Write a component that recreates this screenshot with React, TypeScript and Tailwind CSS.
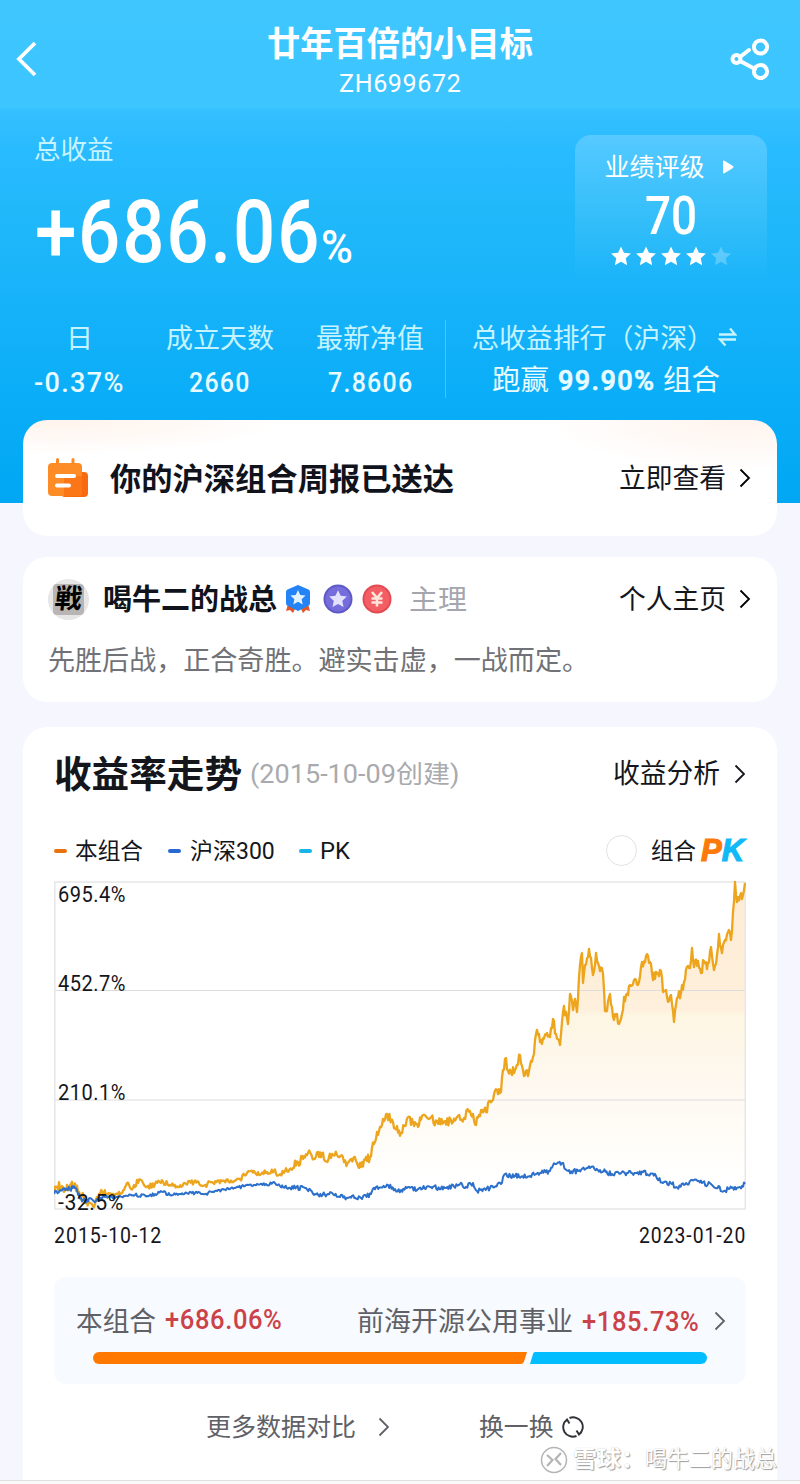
import { ReactNode, useLayoutEffect, useRef } from "react";

interface FitProps {
  className: string;
  children: ReactNode;
}

interface StatProps {
  label: string;
  value: string;
  labelWidth: string;
  valueWidth: string;
}

// squeezes a single line of text into the width of its box
const Fit = ({ className, children }: FitProps) => {
  const outer = useRef<HTMLSpanElement>(null);
  const inner = useRef<HTMLSpanElement>(null);

  useLayoutEffect(() => {
    if (!outer.current || !inner.current) return;
    const scale = outer.current.clientWidth / inner.current.offsetWidth;
    inner.current.style.transform = `scaleX(${scale})`;
  }, []);

  return (
    <span
      ref={outer}
      className={`block shrink-0 whitespace-nowrap leading-none ${className}`}
    >
      <span ref={inner} className="inline-block origin-left align-top">
        {children}
      </span>
    </span>
  );
};

const Chevron = ({ className }: { className: string }) => (
  <svg
    viewBox="0 0 12 20"
    className={`h-5 w-3 shrink-0 ${className}`}
    fill="none"
    stroke="currentColor"
    strokeWidth="1.8"
  >
    <path d="M1.5 1.5 10 10 1.5 18.5" />
  </svg>
);

const STAR =
  "M12 1.5 15.2 8.4 22.8 9.3 17.2 14.5 18.7 22 12 18.3 5.3 22 6.8 14.5 1.2 9.3 8.8 8.4Z";

const Stat = ({ label, value, labelWidth, valueWidth }: StatProps) => (
  <div className="flex flex-col items-center">
    <div className="flex h-[45px] items-center pt-[3px] text-[27px] text-[#c5f3ff]">
      <Fit className={labelWidth}>{label}</Fit>
    </div>
    <div className="flex h-[45px] items-center pt-[2px] text-[28.5px] font-medium tracking-wider text-[#e8fbff]">
      <Fit className={valueWidth}>{value}</Fit>
    </div>
  </div>
);

const portfolio = [
  [54, 1194], [57, 1187], [62, 1186], [66, 1190], [70, 1185], [74, 1186], [78, 1192], [84, 1198],
  [90, 1203], [95, 1204], [100, 1194], [106, 1195], [112, 1196], [120, 1194], [124, 1190],
  [127, 1183], [131, 1189], [135, 1187], [137, 1180], [143, 1183], [147, 1187], [155, 1184],
  [163, 1182], [170, 1185], [178, 1187], [186, 1184], [194, 1182], [203, 1186], [212, 1182],
  [222, 1181], [232, 1182], [240, 1179], [247, 1173], [254, 1171], [259, 1175], [267, 1172],
  [274, 1171], [279, 1175], [285, 1171], [293, 1168], [298, 1162], [303, 1159], [308, 1153],
  [314, 1159], [318, 1152], [322, 1153], [325, 1161], [331, 1158], [337, 1155], [344, 1162],
  [350, 1160], [356, 1161], [361, 1167], [365, 1160], [370, 1157], [374, 1144], [377, 1132],
  [380, 1127], [383, 1119], [387, 1114], [393, 1122], [397, 1126], [401, 1133], [408, 1117],
  [413, 1122], [418, 1127], [422, 1116], [429, 1119], [437, 1121], [445, 1121], [453, 1122],
  [458, 1116], [464, 1118], [470, 1111], [473, 1114], [476, 1125], [479, 1115], [482, 1110],
  [486, 1112], [490, 1101], [493, 1100], [497, 1090], [501, 1092], [503, 1070], [506, 1058],
  [508, 1071], [511, 1072], [515, 1070], [520, 1055], [523, 1070], [528, 1076], [531, 1061],
  [534, 1054], [536, 1034], [539, 1034], [542, 1044], [546, 1035], [550, 1037], [553, 1019],
  [556, 1034], [560, 1045], [562, 1022], [564, 1006], [568, 1024], [570, 994], [573, 1010],
  [575, 999], [577, 1012], [579, 977], [582, 953], [583, 983], [585, 965], [589, 949], [593, 975],
  [596, 953], [599, 966], [603, 974], [605, 1011], [607, 1011], [610, 994], [614, 1020],
  [617, 1014], [619, 1024], [622, 1014], [624, 997], [628, 995], [630, 985], [634, 980],
  [638, 985], [641, 967], [646, 956], [650, 962], [653, 980], [656, 972], [661, 971], [663, 992],
  [666, 990], [669, 1001], [671, 995], [674, 1022], [677, 998], [681, 993], [684, 982],
  [688, 966], [690, 968], [692, 948], [694, 967], [698, 961], [701, 973], [704, 961], [707, 969],
  [711, 947], [714, 970], [717, 955], [719, 934], [722, 953], [725, 940], [729, 930], [731, 940],
  [733, 912], [735, 882], [737, 902], [740, 896], [742, 899], [745, 883],
];

const index300 = [
  [54, 1194], [60, 1190], [64, 1188], [70, 1189], [75, 1188], [80, 1198], [85, 1201], [90, 1198],
  [96, 1201], [105, 1197], [115, 1198], [125, 1196], [135, 1195], [147, 1196], [155, 1194],
  [163, 1192], [170, 1195], [180, 1194], [195, 1193], [205, 1194], [215, 1191], [230, 1189],
  [245, 1186], [257, 1184], [267, 1185], [274, 1182], [280, 1186], [290, 1188], [305, 1188],
  [315, 1194], [328, 1194], [340, 1197], [350, 1197], [361, 1198], [371, 1194], [376, 1187],
  [388, 1185], [395, 1189], [401, 1190], [408, 1187], [418, 1189], [430, 1187], [445, 1188],
  [462, 1184], [465, 1188], [473, 1183], [477, 1191], [490, 1188], [501, 1184], [504, 1175],
  [515, 1176], [530, 1176], [540, 1173], [550, 1171], [555, 1164], [562, 1163], [568, 1171],
  [578, 1171], [590, 1168], [600, 1170], [612, 1174], [628, 1173], [643, 1172], [656, 1176],
  [663, 1183], [672, 1184], [676, 1187], [684, 1185], [692, 1180], [702, 1183], [712, 1185],
  [724, 1191], [735, 1187], [740, 1187], [745, 1184],
];

const toPath = (points: number[][], calm: number, lively: number) => {
  let d = `M${points[0][0]} ${points[0][1]}`;
  let seed = 17;
  for (let i = 1; i < points.length; i++) {
    const [x0, y0] = points[i - 1];
    const [x1, y1] = points[i];
    const steps = Math.max(1, Math.round((x1 - x0) / 1.1));
    for (let s = 1; s <= steps; s++) {
      seed = (seed * 16807) % 2147483647;
      const swing = x0 > 100 && x0 < 290 ? calm : lively;
      const noise = s === steps ? 0 : (seed / 2147483647 - 0.5) * swing;
      const x = x0 + ((x1 - x0) * s) / steps;
      const y = Math.max(882, y0 + ((y1 - y0) * s) / steps + noise);
      d += `L${x.toFixed(1)} ${y.toFixed(1)}`;
    }
  }
  return d;
};

const Header = () => (
  <header className="h-[503px] bg-[linear-gradient(180deg,#3fc6ff_0px,#3cc5ff_108px,#35c0ff_109px,#29bbff_150px,#20b8f9_220px,#18b3fa_290px,#0baef8_390px,#01a7f3_503px)] text-white">
    <div className="flex h-[108px] justify-between pl-4 pr-[30px] pt-6">
      <svg viewBox="0 0 21 36" className="mt-[17px] h-9 w-[21px]" fill="none" stroke="currentColor" strokeWidth="3.8">
        <path d="M19 2 3 18 19 34" />
      </svg>
      <div className="ml-[33px] flex flex-col items-center">
        <div className="flex h-[38px] items-center pt-px text-[34px] font-bold">
          <Fit className="w-[266px]">廿年百倍的小目标</Fit>
        </div>
        <div className="flex h-[42px] items-center text-[26.500px] tracking-wide">
          <Fit className="w-[122px]">ZH699672</Fit>
        </div>
      </div>
      <svg viewBox="0 0 40 42" className="mt-[14px] h-[42px] w-10" fill="none" stroke="currentColor" strokeWidth="4">
        <circle cx="30.500" cy="9" r="6.600" />
        <circle cx="6.500" cy="21" r="4" />
        <circle cx="30.500" cy="33.500" r="6.600" />
        <path d="M10 19 19 12M10 23 25 31" strokeLinecap="round" />
      </svg>
    </div>

    <div className="flex h-[207px] justify-between pl-[34px] pr-[33px] pt-[27px]">
      <div>
        <div className="flex h-7 items-center pt-[3px] text-[26.500px] text-[#c5f3ff]">
          <Fit className="w-20">总收益</Fit>
        </div>
        <div className="mt-[26px] flex items-end text-[87px] font-medium tracking-wide">
          <Fit className="ml-px w-[43px]">+</Fit>
          <Fit className="w-[243px]">686.06</Fit>
          <Fit className="mb-[6px] w-[34px] text-[46px]">%</Fit>
        </div>
      </div>
      <div className="flex h-[150px] w-48 flex-col items-center rounded-t-2xl bg-linear-to-b from-white/20 to-white/0">
        <div className="mt-[18px] flex h-7 items-center gap-[18px] pr-1 text-[25px]">
          <Fit className="w-[100px]">业绩评级</Fit>
          <svg viewBox="0 0 11 14" className="h-[14px] w-[11px]" fill="currentColor">
            <path d="M0 1.5Q0 0 1.5 .7L10 6Q11 7 10 8L1.5 13.3Q0 14 0 12.5Z" />
          </svg>
        </div>
        <div className="mt-[9px] text-[53px] font-medium">
          <Fit className="w-[52px]">70</Fit>
        </div>
        <div className="mt-[2px] flex gap-[3px]">
          {[1, 2, 3, 4, 5].map((n) => (
            <svg key={n} viewBox="0 0 24 24" className="size-[22px]" fill="currentColor" opacity={n < 5 ? 1 : 0.25}>
              <path d={STAR} />
            </svg>
          ))}
        </div>
      </div>
    </div>

    <div className="flex pl-[34px]">
      <Stat label="日" value="-0.37%" labelWidth="w-[27px]" valueWidth="w-[91px]" />
      <div className="ml-[41px]">
        <Stat label="成立天数" value="2660" labelWidth="w-[108px]" valueWidth="w-[62px]" />
      </div>
      <div className="ml-[42px]">
        <Stat label="最新净值" value="7.8606" labelWidth="w-[108px]" valueWidth="w-[85px]" />
      </div>
      <div className="ml-[21px] mt-[5px] h-[78px] w-px bg-white/25" />
      <div className="ml-[26px]">
        <div className="flex h-[45px] items-center pt-[3px] text-[27px] text-[#c5f3ff]">
          <Fit className="w-[242px]">总收益排行（沪深）</Fit>
          <svg viewBox="0 0 19 18" className="mb-[5px] ml-1 h-[18px] w-[19px]" fill="none" stroke="currentColor" strokeWidth="2.400">
            <path d="M1 6.500H17L12 .5M18 11.500H2L7.500 17.500" />
          </svg>
        </div>
        <div className="ml-5 flex h-[41px] items-center pt-px text-[28px] text-[#e8fbff]">
          <Fit className="w-[57px]">跑赢</Fit>
          <Fit className="ml-[9px] w-[97px] font-medium tracking-wider [-webkit-text-stroke:0.7px_#e8fbff]">99.90%</Fit>
          <Fit className="ml-2 w-[57px]">组合</Fit>
        </div>
      </div>
    </div>
  </header>
);

const WeeklyCard = () => (
  <section className="-mt-[83px] flex h-[116px] items-center rounded-3xl bg-white bg-[radial-gradient(ellipse_220px_34px_at_40px_0px,#fff4ed_0%,#fff9f5_55%,transparent_100%),radial-gradient(ellipse_200px_50px_at_720px_0px,#fff4ed_0%,#fffaf7_60%,transparent_100%)] pl-[25px] pr-[26px]">
    <svg viewBox="0 0 42 40" className="h-10 w-[42px]">
      <rect x="13" y="14" width="27" height="25" rx="4" fill="#f96a10" />
      <rect x="0" y="5" width="34" height="33" rx="4" fill="#fd8c26" />
      <path d="M16 38V22Q16 18 20 18H34V34Q34 38 30 38Z" fill="#fb7617" />
      <path d="M9.500 1.500V7M25 1.500V7" stroke="#fd8c26" strokeWidth="3" strokeLinecap="round" />
      <path d="M9 18H26M9 27.500H21" stroke="#fff" strokeWidth="4" strokeLinecap="round" />
    </svg>
    <Fit className="ml-5 mt-[2px] w-[344px] text-[31px] font-bold text-[#10131c]">你的沪深组合周报已送达</Fit>
    <Fit className="ml-auto mt-[3px] w-[107px] text-[27px] text-[#14161c]">立即查看</Fit>
    <Chevron className="ml-[13px]" />
  </section>
);

const OwnerCard = () => (
  <section className="mt-[21px] h-[145px] rounded-3xl bg-white pl-[25px] pr-[26px] pt-5">
    <div className="flex h-11 items-center">
      <div className="flex size-[41px] items-center justify-center rounded-full bg-[#e6e6e6]">
        <div className="flex size-[31px] items-center justify-center rounded-sm bg-[#b9b5b5] text-[27px] font-bold leading-none text-black">
          <span className="-skew-x-6">戦</span>
        </div>
      </div>
      <Fit className="ml-[14px] mt-[3px] w-[174px] text-[29px] font-bold text-[#10131c]">喝牛二的战总</Fit>
      <svg viewBox="0 0 26 30" className="ml-2 h-[30px] w-[26px]">
        <path d="M3 20 1 27 5 26 8 29 11 23ZM23 20 25 27 21 26 18 29 15 23Z" fill="#e2572b" />
        <path d="M13 1 23.500 5.500Q25 6.200 25 8V19Q25 21 23.500 21.700L13 27 2.500 21.700Q1 21 1 19V8Q1 6.200 2.500 5.500Z" fill="#2483f6" />
        <path d={STAR} transform="translate(4.600 5) scale(.7)" fill="#e2f3ff" />
      </svg>
      <svg viewBox="0 0 30 30" className="ml-3 size-[30px]">
        <circle cx="15" cy="15" r="14.500" fill="#5f59c6" />
        <circle cx="15" cy="15" r="12.500" fill="#756ddb" />
        <path d={STAR} transform="translate(5.200 4.900) scale(.82)" fill="#e4e1ff" />
      </svg>
      <svg viewBox="0 0 30 30" className="ml-[9px] size-[30px]">
        <circle cx="15" cy="15" r="14.500" fill="#e24a54" />
        <circle cx="15" cy="15" r="12.500" fill="#f35e64" />
        <path d="M10 8 15 14 20 8M15 14V22.500M9.500 14.500H20.500M9.500 18.500H20.500" fill="none" stroke="#ffe4dc" strokeWidth="2.600" />
      </svg>
      <Fit className="ml-[17px] mt-[3px] w-[58px] text-[28px] text-[#a5a6ad]">主理</Fit>
      <Fit className="ml-auto mt-[3px] w-[107px] text-[27px] text-[#14161c]">个人主页</Fit>
      <Chevron className="ml-[13px]" />
    </div>
    <div className="mt-[27px] text-[27px] text-[#717277]">
      <Fit className="w-[541px]">先胜后战，正合奇胜。避实击虚，一战而定。</Fit>
    </div>
  </section>
);

const Chart = () => {
  const line = toPath(portfolio, 5, 10);

  return (
    <div className="relative -mr-px mt-[10px] h-[329px] w-[692px] text-[21.500px] tracking-wide">
      <svg viewBox="54 881 692 329" className="h-full w-full">
        <defs>
          <linearGradient id="fade" x1="0" y1="882" x2="0" y2="1209" gradientUnits="userSpaceOnUse">
            <stop offset="0" stopColor="#fdebd4" />
            <stop offset=".39" stopColor="#fef0dc" />
            <stop offset=".41" stopColor="#fdf6e3" />
            <stop offset=".62" stopColor="#fef8f0" />
            <stop offset=".8" stopColor="#fffdf8" />
            <stop offset=".9" stopColor="#fff" />
          </linearGradient>
        </defs>
        <path d={`${line}L745 1209L54 1209Z`} fill="url(#fade)" />
        <path d="M54 990.500H745M54 1100H745" stroke="#dcdcdc" strokeWidth="1.200" />
        <rect x="54.800" y="882" width="690.500" height="327" fill="none" stroke="#e6e6e6" strokeWidth="1.500" />
        <path d={line} fill="none" stroke="#eca51c" strokeWidth="2.300" strokeLinejoin="round" />
        <path d={toPath(index300, 3, 5)} fill="none" stroke="#2c70cc" strokeWidth="2" strokeLinejoin="round" />
      </svg>
      <Fit className="absolute left-1 top-[3px] w-[68px]">695.4%</Fit>
      <Fit className="absolute left-1 top-[92px] w-[68px]">452.7%</Fit>
      <Fit className="absolute left-1 top-[201px] w-[68px]">210.1%</Fit>
      <Fit className="absolute left-1 top-[311px] w-[66px]">-32.5%</Fit>
    </div>
  );
};

const TrendCard = () => (
  <section className="mt-[25px] h-[753px] rounded-t-3xl bg-white px-[31px] pt-[22px] text-[#14161c]">
    <div className="flex h-[50px] items-center">
      <Fit className="mt-[2px] w-[188px] text-[37px] font-bold">收益率走势</Fit>
      <Fit className="ml-2 w-[209px] text-[25px] text-[#a9aaae]">(2015-10-09创建)</Fit>
      <Fit className="ml-auto mt-px w-[107px] text-[27px]">收益分析</Fit>
      <Chevron className="ml-[14px]" />
    </div>

    <div className="mt-[35px] flex h-[33px] items-center text-[23px]">
      <span className="h-1 w-[13px] rounded-sm bg-[#e8730e]" />
      <Fit className="ml-2 mt-[2px] w-[68px]">本组合</Fit>
      <span className="ml-[25px] h-1 w-[13px] rounded-sm bg-[#2869d2]" />
      <Fit className="ml-[9px] mt-[2px] w-[85px]">沪深300</Fit>
      <span className="ml-[24px] h-1 w-[13px] rounded-sm bg-[#18b4e8]" />
      <Fit className="ml-[8px] mt-[2px] w-[30px]">PK</Fit>
      <span className="ml-auto size-[31px] rounded-full border-[1.500px] border-[#e2e2e2]" />
      <Fit className="ml-[14px] mt-[2px] w-[45px]">组合</Fit>
      <Fit className="ml-[5px] mr-[2px] w-[43px] font-['Liberation_Sans'] text-[31px] font-bold italic">
        <span className="text-[#fb7a0a] [-webkit-text-stroke:1.200px_#fb7a0a]">P</span>
        <span className="text-[#12b9f7] [-webkit-text-stroke:1.200px_#12b9f7]">K</span>
      </Fit>
    </div>

    <div className="-mt-[1px] pt-[5px]">
      <Chart />
    </div>
    <div className="mt-[15px] flex justify-between text-[21.500px] tracking-wider">
      <Fit className="w-[108px]">2015-10-12</Fit>
      <Fit className="w-[107px]">2023-01-20</Fit>
    </div>

    <div className="mt-[30px] h-[107px] rounded-xl bg-[#f7fafe] pt-7 text-[27px] text-[#5f6167]">
      <div className="flex h-8 items-center pl-[22px]">
        <Fit className="mt-[3px] w-[80px]">本组合</Fit>
        <Fit className="ml-[9px] w-[118px] font-medium tracking-wide text-[#cb4249]">+686.06%</Fit>
        <Fit className="ml-[74px] mt-[3px] w-[216px]">前海开源公用事业</Fit>
        <Fit className="ml-[9px] mt-[3px] w-[118px] font-medium tracking-wide text-[#cb4249]">+185.73%</Fit>
        <Chevron className="ml-[14px]" />
      </div>
      <div className="mt-[15px] flex h-3 pl-[39px]">
        <svg viewBox="0 0 614 12" className="h-3 w-[614px]">
          <path d="M6 0H434L431 9.500Q430 12 427.500 12H6A6 6 0 0 1 6 0Z" fill="#ff7800" />
          <path d="M442 0H608A6 6 0 0 1 608 12H437L440 2Q440.600 0 442 0Z" fill="#02bdff" />
        </svg>
      </div>
    </div>

    <div className="mt-[27px] flex h-8 items-center pl-[152px] text-[25.500px] text-[#5f6167]">
      <Fit className="mt-[2px] w-[150px]">更多数据对比</Fit>
      <Chevron className="ml-[22px]" />
      <Fit className="ml-[89px] mt-[3px] w-[75px]">换一换</Fit>
      <svg viewBox="0 0 22 22" className="ml-2 size-[22px]" fill="none" stroke="#303238" strokeWidth="1.900">
        <path d="M7.500 2A9.600 9.600 0 0 1 17 18.500L14.500 14.500M14.500 20A9.600 9.600 0 0 1 5 3.500L7.500 7.500" />
      </svg>
    </div>

    <div className="-mr-[31px] mt-px flex h-8 items-center justify-end text-[23px] text-white [text-shadow:1px_1px_1px_#9c9c9c,0_0_1px_#c5c5c5]">
      <svg viewBox="0 0 28 28" className="size-7" fill="none" stroke="#b4b4b4" strokeWidth="1.500">
        <circle cx="14" cy="14" r="12.500" />
        <path d="M7 9 12.500 14 7 20M21 7 15.500 13 21 19" strokeWidth="2.200" />
      </svg>
      <Fit className="ml-[5px] w-[72px] font-bold">雪球：</Fit>
      <Fit className="w-[132px]">喝牛二的战总</Fit>
    </div>
  </section>
);

export default function App() {
  return (
    <div className="h-[1484px] w-[800px] overflow-hidden bg-[#f6f6fe] font-[Roboto,'Noto_Sans_CJK_SC',sans-serif]">
      <Header />
      <main className="px-[23px]">
        <WeeklyCard />
        <OwnerCard />
        <TrendCard />
      </main>
      <div className="h-1 border-t border-[#dfdfe4] bg-[#fafafa]" />
    </div>
  );
}
